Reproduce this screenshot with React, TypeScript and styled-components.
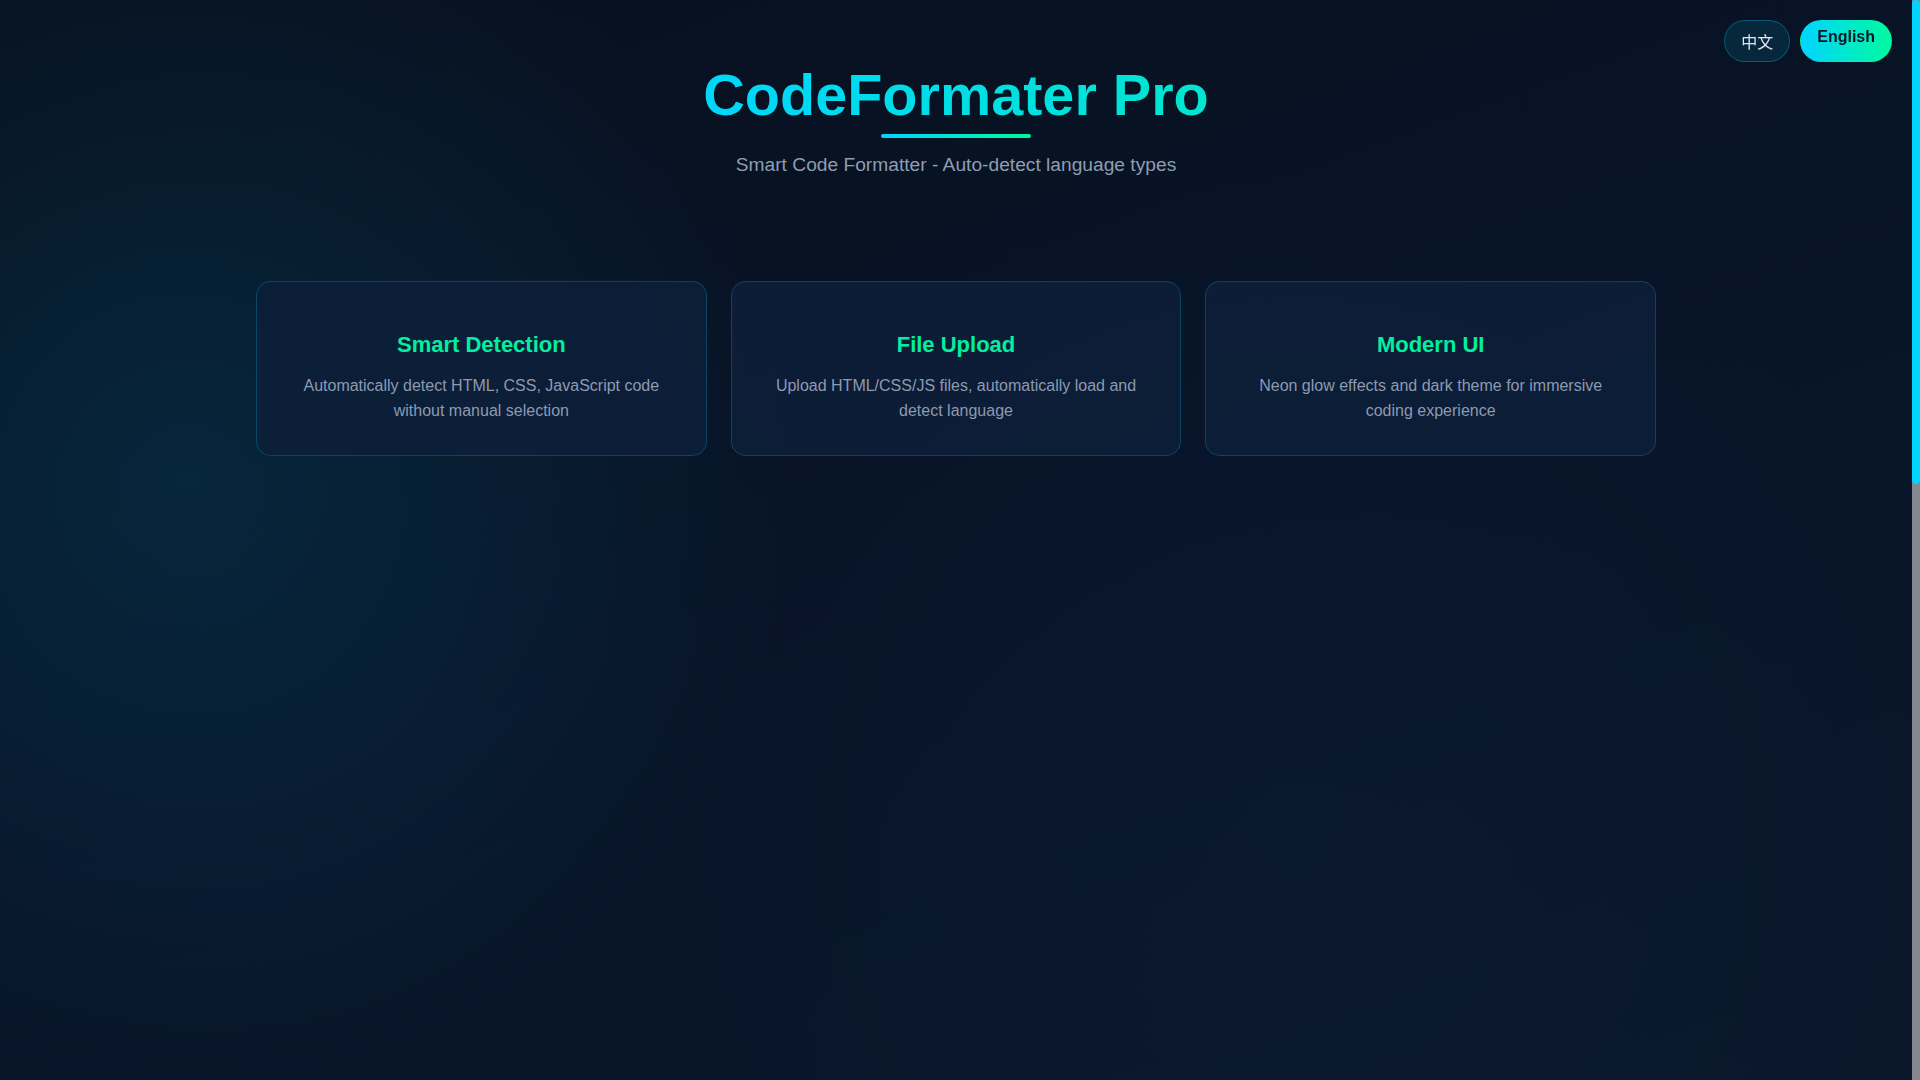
import React, { useState } from 'react';
import styled, { createGlobalStyle } from 'styled-components';

const GlobalStyle = createGlobalStyle`
  * {
    box-sizing: border-box;
  }

  html, body {
    margin: 0;
    padding: 0;
    height: 100%;
    overflow: hidden;
  }

  body {
    font-family: "Liberation Sans", Arial, "Noto Sans CJK SC", sans-serif;
    color: #e0e6ed;
    background: #071326;
  }
`;

const Frame = styled.div`
  display: flex;
  height: 100vh;
`;

const Page = styled.div`
  flex: 1;
  min-width: 0;
  overflow-y: auto;
  background-color: #071326;
  background-image:
    radial-gradient(circle 620px at 184px 478px, rgba(0, 175, 225, 0.13), rgba(0, 175, 225, 0) 100%),
    radial-gradient(circle 700px at 1300px 850px, rgba(40, 80, 140, 0.05), rgba(40, 80, 140, 0) 100%),
    linear-gradient(160deg, #07101e 0%, #081428 55%, #0a172b 100%);
`;

/* drawn scrollbar: the screenshot browser hides native ones */
const ScrollRail = styled.div`
  width: 8px;
  flex-shrink: 0;
  background: #83898f;
`;

const ScrollThumb = styled.div`
  height: 484px;
  border-radius: 4px;
  background: #00d4ff;
`;

const Content = styled.main`
  min-height: 2410px;
`;

const LangSwitch = styled.div`
  position: fixed;
  top: 20px;
  right: 28px;
  display: flex;
  gap: 10px;
  z-index: 10;
`;

const LangButton = styled.button<{ $active?: boolean }>`
  height: 42px;
  padding: ${({ $active }) => ($active ? '0 16px 8px' : '0 16px')};
  display: inline-flex;
  align-items: center;
  justify-content: center;
  border-radius: 21px;
  font-family: "Liberation Sans", Arial, "Noto Sans CJK SC", sans-serif;
  font-size: 16px;
  font-weight: ${({ $active }) => ($active ? 700 : 400)};
  cursor: pointer;
  color: ${({ $active }) => ($active ? '#0a1628' : '#e0e6ed')};
  background: ${({ $active }) =>
    $active ? 'linear-gradient(90deg, #00d4ff 0%, #00fa9e 100%)' : 'rgba(0, 212, 255, 0.1)'};
  border: 1px solid ${({ $active }) => ($active ? 'transparent' : 'rgba(0, 212, 255, 0.3)')};
`;

const Header = styled.header`
  padding-top: 62px;
  text-align: center;
`;

const Title = styled.h1`
  display: inline-block;
  margin: 0;
  font-size: 3.6rem;
  font-weight: 700;
  line-height: normal;
  background: linear-gradient(90deg, #00d6fb 0%, #00e6d0 100%);
  -webkit-background-clip: text;
  background-clip: text;
  color: transparent;
`;

const Underline = styled.div`
  width: 150px;
  height: 4px;
  margin: 6px auto 0;
  border-radius: 2px;
  background: linear-gradient(90deg, #00d4ff 0%, #00f5a0 100%);
`;

const Subtitle = styled.p`
  margin: 16px 0 0;
  font-size: 1.2rem;
  line-height: normal;
  color: #8e9db3;
`;

const Features = styled.section`
  max-width: 1400px;
  margin: 105px auto 0;
  display: grid;
  grid-template-columns: repeat(3, 1fr);
  gap: 24px;
`;

const Card = styled.div`
  padding: 50px 32px 31px;
  border-radius: 15px;
  border: 1px solid rgba(0, 212, 255, 0.22);
  background: rgba(13, 30, 58, 0.85);
  text-align: center;
`;

const CardTitle = styled.h3`
  margin: 0 0 16px;
  font-size: 22px;
  font-weight: 700;
  line-height: normal;
  color: #00f0a0;
`;

const CardText = styled.p`
  margin: 0;
  font-size: 16px;
  line-height: 1.55;
  color: #8c9ab0;
`;

const features = [
  {
    title: 'Smart Detection',
    text: 'Automatically detect HTML, CSS, JavaScript code without manual selection',
  },
  {
    title: 'File Upload',
    text: 'Upload HTML/CSS/JS files, automatically load and detect language',
  },
  {
    title: 'Modern UI',
    text: 'Neon glow effects and dark theme for immersive coding experience',
  },
];

export default function App() {
  const [lang, setLang] = useState<'zh' | 'en'>('en');

  return (
    <Frame>
      <GlobalStyle />
      <Page>
        <LangSwitch>
          <LangButton $active={lang === 'zh'} onClick={() => setLang('zh')}>
            中文
          </LangButton>
          <LangButton $active={lang === 'en'} onClick={() => setLang('en')}>
            English
          </LangButton>
        </LangSwitch>

        <Content>
          <Header>
            <Title>CodeFormater Pro</Title>
            <Underline />
            <Subtitle>Smart Code Formatter - Auto-detect language types</Subtitle>
          </Header>

          <Features>
            {features.map((f) => (
              <Card key={f.title}>
                <CardTitle>{f.title}</CardTitle>
                <CardText>{f.text}</CardText>
              </Card>
            ))}
          </Features>
        </Content>
      </Page>
      <ScrollRail>
        <ScrollThumb />
      </ScrollRail>
    </Frame>
  );
}
